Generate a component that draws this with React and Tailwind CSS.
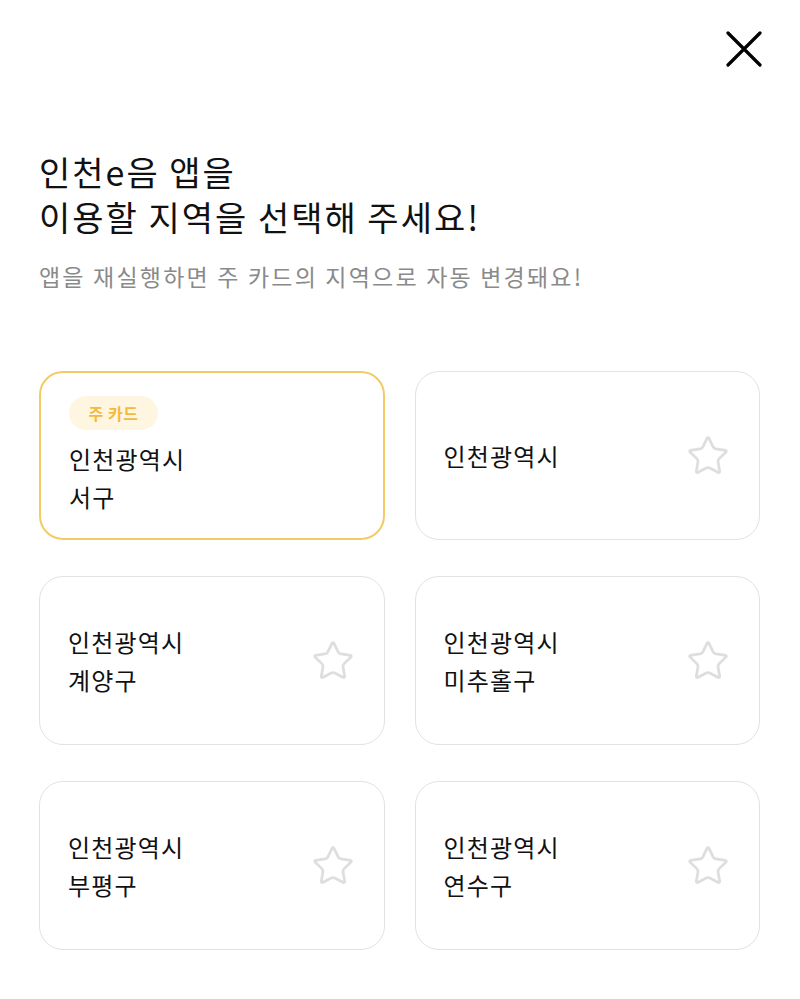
import { Star } from 'lucide-react';

const regions = [
  { city: '인천광역시', gu: '서구', main: true },
  { city: '인천광역시', gu: '' },
  { city: '인천광역시', gu: '계양구' },
  { city: '인천광역시', gu: '미추홀구' },
  { city: '인천광역시', gu: '부평구' },
  { city: '인천광역시', gu: '연수구' },
];

function RegionCard({ city, gu, main }) {
  if (main) {
    return (
      <div className="h-[169px] rounded-[24px] border-2 border-[#f3cb62] bg-white px-[28px] pt-[23px]">
        <span className="inline-flex h-[34px] w-[89px] items-center justify-center rounded-full bg-[#fff6e1] text-[16px] font-bold tracking-[0.5px] text-[#f3b940]">
          주 카드
        </span>
        <div className="mt-[10px] text-[24px] leading-[38px] tracking-[1.2px] text-[#111]">
          <p>{city}</p>
          <p>{gu}</p>
        </div>
      </div>
    );
  }
  return (
    <div className="flex h-[169px] items-center justify-between rounded-[24px] border-[1.5px] border-[#e2e2e2] bg-white pl-[28px] pr-[29px]">
      <div className="text-[24px] leading-[38px] tracking-[1.2px] text-[#111]">
        <p>{city}</p>
        {gu && <p>{gu}</p>}
      </div>
      <Star className="h-[44px] w-[44px] text-[#dedede]" strokeWidth={1.5} />
    </div>
  );
}

export default function App() {
  return (
    <div
      className="h-[999px] w-[800px] bg-white"
      style={{ fontFamily: '"Noto Sans CJK KR", "Noto Sans", sans-serif' }}
    >
      <div className="flex justify-end pr-[38px] pt-[31px]">
        <button type="button" className="flex h-[36px] w-[36px] items-center justify-center text-black">
          <svg width="36" height="36" viewBox="0 0 36 36" fill="none" stroke="currentColor" strokeWidth="3.2" strokeLinecap="round">
            <path d="M2 2 L34 34 M34 2 L2 34" />
          </svg>
        </button>
      </div>

      <div className="px-[39px] pr-[40px]">
        <h1 className="mt-[82px] text-[34px] font-normal leading-[45px] tracking-[2px] text-[#111]">
          인천e음 앱을
          <br />
          이용할 지역을 선택해 주세요!
        </h1>
        <p className="mt-[21px] text-[23px] leading-[32px] tracking-[2.2px] text-[#8a8a8a]">
          앱을 재실행하면 주 카드의 지역으로 자동 변경돼요!
        </p>

        <div className="mt-[79px] grid grid-cols-2 gap-x-[30px] gap-y-[36px]">
          {regions.map((r, i) => (
            <RegionCard key={i} {...r} />
          ))}
        </div>
      </div>
    </div>
  );
}
